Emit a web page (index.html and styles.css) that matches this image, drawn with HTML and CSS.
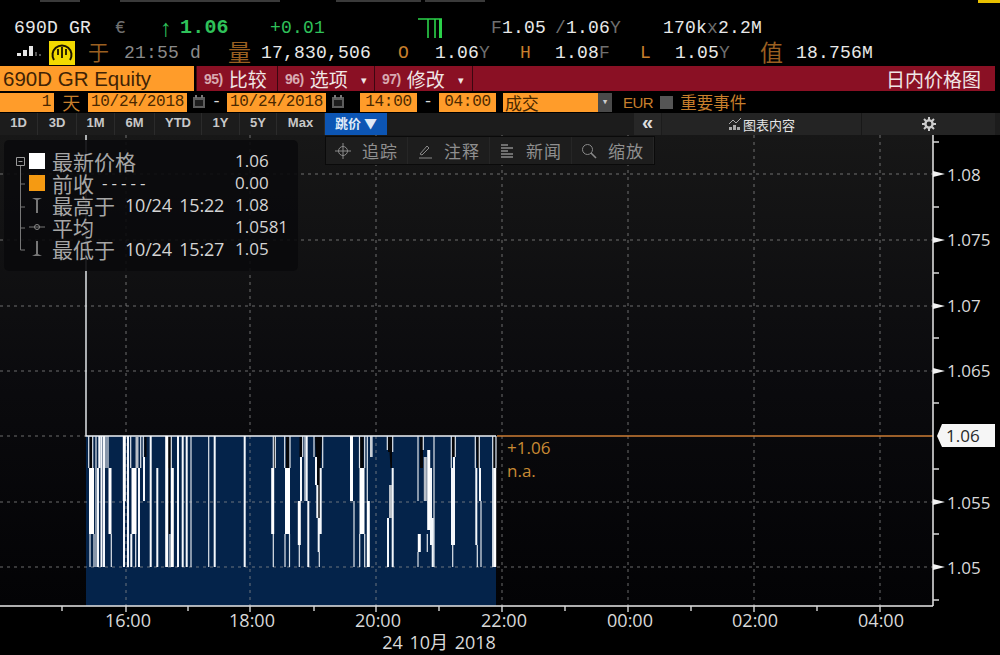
FILE: index.html
```html
<!DOCTYPE html>
<html lang="en">
<head>
    <meta charset="UTF-8">
    <meta name="viewport" content="width=device-width, initial-scale=1.0">
    <title>690D GR Equity</title>
    <link rel="stylesheet" href="styles.css">
</head>
<body>
    <div class="top-strip">
        <i class="strip-a"></i><i class="strip-b"></i><i class="strip-c"></i><i class="strip-d"></i><i class="strip-e"></i>
    </div>

    <div class="quote quote-one">
        <span>690D GR</span>
        <span class="dim">€</span>
        <span class="green thin">↑</span>
        <span class="green bold">1.06</span>
        <span class="green">+0.01</span>
        <span>
            <svg class="ticks-icon" width="26" height="22" viewBox="0 0 26 22">
                <path d="M0 2H24M10 2V21M17 2V21" stroke="#2bd24a" stroke-width="1.6" fill="none"/>
                <path d="M21 2H24V21H21z" fill="#2bd24a"/>
            </svg>
        </span>
        <span><b class="dim">F</b>1.05</span>
        <span><b class="dim">/</b>1.06<b class="dim">Y</b></span>
        <span>170k<b class="dim">x</b>2.2M</span>
    </div>

    <div class="quote quote-two">
        <span>
            <svg width="26" height="16" viewBox="0 0 26 16">
                <path d="M0 11h4v3H0zM6 8h4v6H6zM12 4h4v10h-4z" fill="#e6e6e6"/>
                <path d="M18 10h2v4h-2zM22 12h2v2h-2z" fill="#555"/>
            </svg>
        </span>
        <span class="gauge">
            <svg width="22" height="22" viewBox="0 0 22 22">
                <path d="M3 18A9.500 9.500 0 1 1 19 18" stroke="#1c1400" stroke-width="2" fill="none"/>
                <path d="M11 5V16M7 7V13M15 7V13" stroke="#1c1400" stroke-width="1.800"/>
            </svg>
        </span>
        <span class="cjk">于</span>
        <span class="grey">21:55 d</span>
        <span class="cjk big">量</span>
        <span>17,830,506</span>
        <span class="orange">O</span>
        <span>1.06<b class="dim">Y</b></span>
        <span class="orange">H</span>
        <span>1.08<b class="dim">F</b></span>
        <span class="orange">L</span>
        <span>1.05<b class="dim">Y</b></span>
        <span class="cjk big">值</span>
        <span>18.756M</span>
    </div>

    <div class="title-bar">
        <div class="ticker">690D GR Equity</div>
        <div class="menu-btn menu-95"><em>95)</em> 比较</div>
        <div class="menu-btn menu-96"><em>96)</em> 选项 <small>▾</small></div>
        <div class="menu-btn menu-97"><em>97)</em> 修改 <small>▾</small></div>
        <div class="page-name">日内价格图</div>
    </div>

    <div class="range-bar">
        <span class="field field-num">1</span>
        <span class="unit">天</span>
        <span class="field field-date">10/24/2018</span>
        <svg class="cal" width="14" height="14" viewBox="0 0 14 14"><path d="M1 2h12v11H1z" fill="#5c5c5c"/><path d="M3 5h8v6H3z" fill="#1d1d1d"/><path d="M3 0h2v3H3zM9 0h2v3H9z" fill="#777"/></svg>
        <span class="dash">-</span>
        <span class="field field-date">10/24/2018</span>
        <svg class="cal" width="14" height="14" viewBox="0 0 14 14"><path d="M1 2h12v11H1z" fill="#5c5c5c"/><path d="M3 5h8v6H3z" fill="#1d1d1d"/><path d="M3 0h2v3H3zM9 0h2v3H9z" fill="#777"/></svg>
        <span class="field field-time first-time">14:00</span>
        <span class="dash dash-time">-</span>
        <span class="field field-time">04:00</span>
        <span class="field field-select">成交</span>
        <span class="select-arrow">▾</span>
        <span class="currency">EUR</span>
        <span class="check"></span>
        <span class="events">重要事件</span>
    </div>

    <div class="tab-bar">
        <div class="tabs">
            <span>1D</span><span>3D</span><span>1M</span><span>6M</span><span>YTD</span><span>1Y</span><span>5Y</span><span>Max</span>
            <span class="tab-active">跳价 ▼</span>
        </div>
        <div class="collapse">«</div>
        <div class="chart-content">
            <svg width="14" height="14" viewBox="0 0 14 14"><path d="M1 7L5 3L8 6L13 1" stroke="#aaa" fill="none"/><path d="M1 10h3v3H1zM5 8h3v5H5zM9 10h3v3H9z" fill="#aaa"/></svg>
            图表内容
        </div>
        <div class="settings">
            <svg width="14" height="14" viewBox="0 0 14 14"><circle cx="7" cy="7" r="3.600" fill="none" stroke="#ccc" stroke-width="2.400"/><path d="M7 0V3M7 11V14M0 7H3M11 7H14M2 2L4 4M10 10L12 12M12 2L10 4M4 10L2 12" stroke="#ccc" stroke-width="2"/></svg>
        </div>
    </div>

    <div class="chart">
        <svg class="plot" width="1000" height="520" viewBox="0 135 1000 520">
            <defs>
                <linearGradient id="plot-bg" x1="0" y1="0" x2="0" y2="1">
                    <stop offset="0" stop-color="#171717"/>
                    <stop offset="0.55" stop-color="#0a0a0d"/>
                    <stop offset="1" stop-color="#030305"/>
                </linearGradient>
            </defs>
            <rect x="0" y="135" width="933" height="471" fill="url(#plot-bg)"/>

            <!-- area under the price -->
            <rect x="86" y="436" width="410" height="170" fill="#04234a"/>

            <!-- grid -->
            <path class="grid" d="M0 174H933M0 240H933M0 306H933M0 371H933M0 502H933M0 567H933"/>
            <path class="grid" d="M126 135V606M250 135V606M376 135V606M502 135V606M628 135V606M754 135V606M880 135V606"/>
            <path class="grid" d="M0 436H86"/>

            <!-- gaps where the price drops -->
            <path class="notch" d="M89.500 437h3v31h-3zM144.500 437h2v20h-2zM168 437h3v31h-3zM168.500 468h1.500v66h-1.500zM273.700 437h1.600v31h-1.600zM286 437h3.500v31h-3.500zM299.500 437h3v20h-3zM315 437H322L320.500 468L320 534H318.500L317 480zM360 437h3.500v31h-3.500zM370 437h2v20h-2zM388 437H392V468H390.500L389.500 452H388zM420 437h3v31h-3zM451.700 437h3.300v20h-3.300zM476 437h4v31h-3zM493 437h2.500v31h-2.500z"/>

            <!-- price line -->
            <path class="price-line" d="M86 135V436H496"/>
            <path class="w1" d="M88.700 436V468M92.700 436V468M90 534V567M94 534V567M96 436V567M106 436V468M108 436V468M111.300 534V567M130.700 436V468M140.700 436V468M135.700 534V567M143.300 436V457M171.300 436V468M170 534V567M191 436V567M208.700 436V567M273.300 436V468M273.300 534V567M275.300 436V468M284.700 436V468M285 534V567M290 436V468M289.500 534V567M299.300 545V567M302.700 436V457M305 436V501M314 436V457M319.300 552V567M322.700 436V468M354 501V567M359.500 436V468M359.700 534V567M364.700 436V468M364.700 534V567M367.300 436V501M370.700 436V457M372 436V457M387.300 436V450M392.700 436V452M418 436V501M418 552V567M423.300 436V450M427.300 534V552M434 436V567M451.300 436V468M452.700 545V567M455.300 436V457M475.300 436V468M479.300 436V468M477.300 545V567M481 501V567M492.700 436V567M496 436V468"/>
            <path class="w2" d="M98 468V567M99.300 436V468M101.500 436V567M104 436V567M124 501V567M128 436V567M131.300 534V567M139 468V567M144 457V501M150.700 436V567M157.300 468V567M178 436V567M182.700 436V567M186.700 436V567M214.700 436V567M244.700 436V567M301 457V501M306.700 436V501M308.300 501V567M316 457V485M317.300 485V518M318.700 518V552M320.700 468V534M388 518V567M392.700 468V567M431 468V545M432.700 518V567M452 468V545M454 457V545M476.300 468V545M480 468V501"/>
            <path class="w3 grey-bar" d="M137 436V468M390.500 485V518M425.300 457V501"/>
            <path class="w3" d="M110 468V534M124.300 436V501M166.700 436V567M172.300 468V567M272.700 468V534M299.300 501V545M351.500 436V501M368.300 501V567M419.300 534V552M428.700 450V530M494.700 468V567"/>
            <path class="w5" d="M91.500 468V534M134 468V534M287.500 468V534M362 468V534"/>

            <!-- last price -->
            <path class="last-line" d="M497 436H933"/>

            <!-- axes -->
            <path class="axis" d="M933 135V606M0 606H933"/>
            <path class="axis-tick" d="M62 606V611M126 606V612M188 606V611M250 606V612M314 606V611M376 606V612M439 606V611M502 606V612M565 606V611M628 606V612M691 606V611M754 606V612M817 606V611M880 606V612"/>
            <path class="axis-tick" d="M933 142H939M933 207H939M933 273H939M933 338H939M933 403H939M933 469H939M933 534H939M933 600H939"/>
            <path class="axis-mark" d="M933 171L945 174L933 177zM933 237L945 240L933 243zM933 303L945 306L933 309zM933 368L945 371L933 374zM933 499L945 502L933 505zM933 564L945 567L933 570z"/>
            <path class="price-tag" d="M937 436L942 424H995V447H942z"/>

            <text class="price" x="947" y="181">1.08</text>
            <text class="price" x="947" y="246">1.075</text>
            <text class="price" x="947" y="312">1.07</text>
            <text class="price" x="947" y="377">1.065</text>
            <text class="price price-last" x="946" y="442">1.06</text>
            <text class="price" x="947" y="509">1.055</text>
            <text class="price" x="947" y="574">1.05</text>

            <text class="last-note" x="507" y="454">+1.06</text>
            <text class="last-note" x="507" y="477">n.a.</text>

            <text class="time" x="128" y="627">16:00</text>
            <text class="time" x="252" y="627">18:00</text>
            <text class="time" x="378" y="627">20:00</text>
            <text class="time" x="504" y="627">22:00</text>
            <text class="time" x="630" y="627">00:00</text>
            <text class="time" x="755" y="627">02:00</text>
            <text class="time" x="881" y="627">04:00</text>
            <text class="date" x="439" y="649">24 10月 2018</text>
        </svg>

        <div class="toolbar">
            <div class="tool">
                <svg width="16" height="16" viewBox="0 0 16 16"><circle cx="8" cy="8" r="4.500" fill="none" stroke="#8a8a8a"/><path d="M8 0V16M0 8H16" stroke="#8a8a8a"/></svg>
                <span>追踪</span>
            </div>
            <div class="tool">
                <svg width="16" height="16" viewBox="0 0 16 16"><path d="M3 11L10 3L12 5L5 12zM2 15H15" stroke="#8a8a8a" fill="none"/></svg>
                <span>注释</span>
            </div>
            <div class="tool">
                <svg width="16" height="16" viewBox="0 0 16 16"><path d="M2 2H9M2 5H14M2 8H9M2 11H14M2 14H14" stroke="#8a8a8a" stroke-width="1.400"/></svg>
                <span>新闻</span>
            </div>
            <div class="tool">
                <svg width="16" height="16" viewBox="0 0 16 16"><circle cx="6.500" cy="6.500" r="5" fill="none" stroke="#8a8a8a"/><path d="M10 10L15 15" stroke="#8a8a8a" stroke-width="1.600"/></svg>
                <span>缩放</span>
            </div>
        </div>

        <div class="legend">
            <svg class="legend-tree" width="16" height="100" viewBox="0 0 16 100">
                <path d="M1.500 .5h8v8h-8zM3.500 4.500h4" stroke="#999" fill="none"/>
                <path d="M5.500 9V93H10M5.500 27H10M5.500 50H10M5.500 71H10" stroke="#777" fill="none"/>
            </svg>
            <div class="legend-row">
                <i class="swatch swatch-white"></i>
                <div class="legend-name"><b class="han">最新价格</b></div>
                <span>1.06</span>
            </div>
            <div class="legend-row">
                <i class="swatch swatch-orange"></i>
                <div class="legend-name"><b class="han">前收</b><span class="dashes">-----</span></div>
                <span>0.00</span>
            </div>
            <div class="legend-row">
                <svg class="swatch" width="16" height="18" viewBox="0 0 16 18"><path d="M3 2H13L9 4V17H7V4z" fill="#777"/></svg>
                <div class="legend-name"><b class="han">最高于</b><span class="stamp">10/24 15:22</span></div>
                <span>1.08</span>
            </div>
            <div class="legend-row">
                <svg class="swatch" width="16" height="18" viewBox="0 0 16 18"><path d="M0 9H16" stroke="#777"/><circle cx="8" cy="9" r="2.500" fill="none" stroke="#888"/></svg>
                <div class="legend-name"><b class="han">平均</b></div>
                <span>1.0581</span>
            </div>
            <div class="legend-row">
                <svg class="swatch" width="16" height="18" viewBox="0 0 16 18"><path d="M3 16H13L9 14V1H7V14z" fill="#777"/></svg>
                <div class="legend-name"><b class="han">最低于</b><span class="stamp">10/24 15:27</span></div>
                <span>1.05</span>
            </div>
        </div>
    </div>
</body>
</html>
```

FILE: styles.css
```css
* {
    box-sizing: border-box;
}
html, body {
    margin: 0;
    padding: 0;
    height: 655px;
    overflow: hidden;
}
body {
    background: #000;
    color: #e8e8e8;
    font-family: "Liberation Mono", "Noto Sans CJK SC", monospace;
    width: 1000px;
}

/* strip left from the window above */
.top-strip {
    display: flex;
    height: 15px;
    align-items: flex-start;
}
.top-strip i {
    display: block;
    height: 2px;
    background: #3a3a3a;
}
.strip-a { width: 40px; margin-left: 40px; }
.strip-b { width: 160px; margin-left: 40px; }
.strip-c { width: 85px; margin-left: 56px; }
.strip-d { width: 60px; margin-left: 4px; }
.strip-e { width: 22px; margin-left: 493px; background: #e8c000 !important; height: 3px !important; }

/* quote rows */
.quote {
    display: grid;
    align-items: center;
    height: 25px;
    font-size: 18px;
    letter-spacing: 0.2px;
    white-space: nowrap;
}
.quote b {
    font-weight: normal;
}
.quote-one {
    grid-template-columns: 101px 45px 20px 90px 148px 73px 64px 108px auto;
    padding-left: 14px;
}
.quote-two {
    grid-template-columns: 32px 39px 36px 104px 33px 137px 37px 85px 35px 85px 35px 85px 36px auto;
    padding-left: 17px;
}
.dim { color: #6f6f6f; }
.grey { color: #8a8a8a; }
.green { color: #2fc25a; }
.bold { font-weight: bold; font-size: 20px; }
.thin { font-family: "Liberation Sans", sans-serif; font-size: 24px; line-height: 22px; }
.orange { color: #c87f2c; }
.cjk {
    font-family: "Noto Sans CJK SC", sans-serif;
    font-size: 21px;
    line-height: 24px;
    margin-top: -4px;
    color: #9a5f20;
}
.big { font-size: 23px; }
.gauge {
    display: flex;
    align-items: center;
    justify-content: center;
    width: 26px;
    height: 24px;
    background: #f2d900;
}
.ticks-icon {
    display: block;
}

/* red title bar */
.title-bar {
    display: flex;
    height: 25px;
    margin-top: 1px;
    padding-right: 5px;
    font-family: "Noto Sans CJK SC", sans-serif;
    font-size: 19px;
    color: #f0e6e6;
}
.ticker {
    width: 194px;
    padding-left: 3px;
    background: #ff9c2a;
    color: #3f2305;
    font-family: "Liberation Sans", sans-serif;
    font-size: 20.5px;
    line-height: 26px;
}
.menu-btn {
    display: flex;
    align-items: center;
    gap: 6px;
    background: #8a1024;
    border-left: 1px solid #3c0710;
    padding-left: 7px;
    line-height: 24px;
}
.menu-btn em {
    font-style: normal;
    font-family: "Liberation Sans", sans-serif;
    font-weight: bold;
    font-size: 14px;
    letter-spacing: -0.5px;
    color: #d8a8b0;
}
.menu-btn small {
    font-size: 11px;
    margin-left: 7px;
}
.menu-95 { width: 81px; margin-left: 2px; }
.menu-96 { width: 97px; }
.menu-97 { width: 98px; }
.page-name {
    flex: 1;
    background: #8a1024;
    border-left: 1px solid #3c0710;
    text-align: right;
    padding-right: 14px;
    line-height: 25px;
}

/* date range */
.range-bar {
    display: flex;
    align-items: center;
    height: 20px;
    margin-top: 1px;
    font-size: 16px;
    letter-spacing: -0.3px;
    color: #c87f2c;
}
.field {
    height: 19px;
    line-height: 19px;
    background: #ff9c2a;
    color: #4a2800;
    white-space: nowrap;
}
.field-num { width: 54px; text-align: right; padding-right: 3px; }
.unit {
    width: 34px;
    text-align: center;
    font-family: "Noto Sans CJK SC", sans-serif;
    font-size: 18px;
    line-height: 19px;
}
.field-date { width: 99px; text-align: center; }
.cal { margin-left: 5px; }
.dash { width: 21px; text-align: center; color: #ddd; }
.field-time { width: 57px; text-align: center; }
.first-time { margin-left: 15px; }
.dash-time { width: 22px; }
.field-select {
    width: 95px;
    margin-left: 7px;
    padding-left: 2px;
    font-family: "Noto Sans CJK SC", sans-serif;
    font-size: 17px;
}
.select-arrow {
    width: 14px;
    height: 19px;
    line-height: 18px;
    text-align: center;
    background: #4a4a4a;
    color: #ccc;
    font-size: 11px;
}
.currency {
    margin-left: 11px;
    font-family: "Liberation Sans", sans-serif;
    font-size: 15px;
    letter-spacing: -0.5px;
}
.check {
    width: 13px;
    height: 13px;
    margin-left: 7px;
    background: #555;
}
.events {
    margin-left: 7px;
    font-family: "Noto Sans CJK SC", sans-serif;
    font-size: 16.5px;
    letter-spacing: 0;
}

/* tabs */
.tab-bar {
    display: flex;
    height: 22px;
    margin-top: 1px;
    padding-right: 5px;
    background: #1c1c1c;
    font-family: "Liberation Sans", sans-serif;
    font-size: 13px;
    font-weight: bold;
    color: #c8c8c8;
}
.tabs {
    display: grid;
    grid-template-columns: 38px 39px 38px 40px 47px 38px 37px 48px 62px;
    width: 634px;
    line-height: 20px;
    text-align: center;
}
.tabs span {
    border-right: 1px solid #2b2b2b;
}
.tabs .tab-active {
    background: #0c55b4;
    color: #dfe9f7;
    font-family: "Noto Sans CJK SC", sans-serif;
    font-size: 13px;
    border: 0;
}
.collapse {
    width: 27px;
    background: #272727;
    text-align: center;
    font-size: 20px;
    line-height: 18px;
    color: #ddd;
}
.chart-content {
    display: flex;
    align-items: center;
    justify-content: center;
    gap: 1px;
    width: 199px;
    margin-left: 1px;
    background: #242424;
    font-family: "Noto Sans CJK SC", sans-serif;
    font-weight: normal;
    font-size: 13px;
    color: #e4e4e4;
}
.settings {
    display: flex;
    align-items: center;
    justify-content: center;
    flex: 1;
    background: #242424;
    border-left: 1px solid #181818;
}

/* chart */
.chart {
    position: relative;
    height: 520px;
}
.plot {
    display: block;
}
.grid {
    fill: none;
    stroke: #8d8d8d;
    stroke-width: 1;
    stroke-dasharray: 3 4;
    opacity: 0.75;
}
.notch {
    fill: #050507;
}
.price-line {
    fill: none;
    stroke: #eef2f6;
    stroke-width: 1.4;
}
.w1, .w2, .w3, .w5 {
    fill: none;
    stroke: #f4f7fb;
}
.w1 { stroke-width: 1.2; stroke: #dfe5ec; }
.w2 { stroke-width: 2; }
.w3 { stroke-width: 3; stroke: #fff; }
.w5 { stroke-width: 5; stroke: #fff; }
.w3.grey-bar { stroke: #b9bfc7; }
.last-line {
    stroke: #cd7d35;
    stroke-width: 1.5;
}
.axis {
    fill: none;
    stroke: #e8e8e8;
    stroke-width: 1.5;
}
.axis-tick {
    stroke: #d8d8d8;
    stroke-width: 1.4;
}
.axis-mark {
    fill: #f2f2f2;
}
.price-tag {
    fill: #f6f6f6;
}
.price, .time, .date, .last-note {
    font-family: "Open Sans", "Noto Sans CJK SC", sans-serif;
    fill: #d9d9d9;
}
.price {
    font-size: 17px;
}
.price-last {
    fill: #2a2a2a;
}
.last-note {
    font-size: 17px;
    fill: #c88a34;
}
.time {
    font-size: 18px;
    text-anchor: middle;
}
.date {
    font-size: 18px;
    word-spacing: 2px;
    text-anchor: middle;
}

/* floating toolbar */
.toolbar {
    position: absolute;
    left: 325px;
    top: 1px;
    display: grid;
    grid-template-columns: repeat(4, 82px);
    height: 29px;
    background: #1d1d1d;
    border: 1px solid #0a0a0a;
    font-family: "Noto Sans CJK SC", sans-serif;
    font-size: 17px;
    color: #8f8f8f;
}
.tool {
    display: flex;
    align-items: center;
    gap: 11px;
    padding-left: 9px;
    border-right: 1px solid #262626;
    letter-spacing: 1px;
}

/* legend box */
.legend {
    position: absolute;
    left: 4px;
    top: 5px;
    width: 294px;
    height: 131px;
    padding: 10px 0 0 25px;
    background: rgba(10, 10, 12, 0.9);
    border-radius: 5px;
    font-family: "Open Sans", "Noto Sans CJK SC", sans-serif;
    font-size: 17px;
    color: #d4d4d4;
}
.legend-tree {
    position: absolute;
    left: 11px;
    top: 17px;
}
.legend-row {
    display: grid;
    grid-template-columns: 23px 183px auto;
    align-items: center;
    height: 22px;
    line-height: 22px;
    white-space: nowrap;
}
.legend-name {
    display: flex;
    height: 22px;
    gap: 10px;
}
.han {
    display: block;
    height: 22px;
    font-family: "Noto Sans CJK SC", sans-serif;
    font-weight: normal;
    font-size: 21px;
    line-height: 22px;
    color: #a6a6a6;
}
.dashes {
    margin-left: -2px;
    letter-spacing: 4px;
}
.stamp {
    font-size: 18px;
    word-spacing: 3px;
    letter-spacing: -0.2px;
}
.swatch {
    display: block;
    width: 16px;
}
i.swatch {
    height: 16px;
}
.swatch-white { background: #fff; }
.swatch-orange { background: #f59a12; }
```
